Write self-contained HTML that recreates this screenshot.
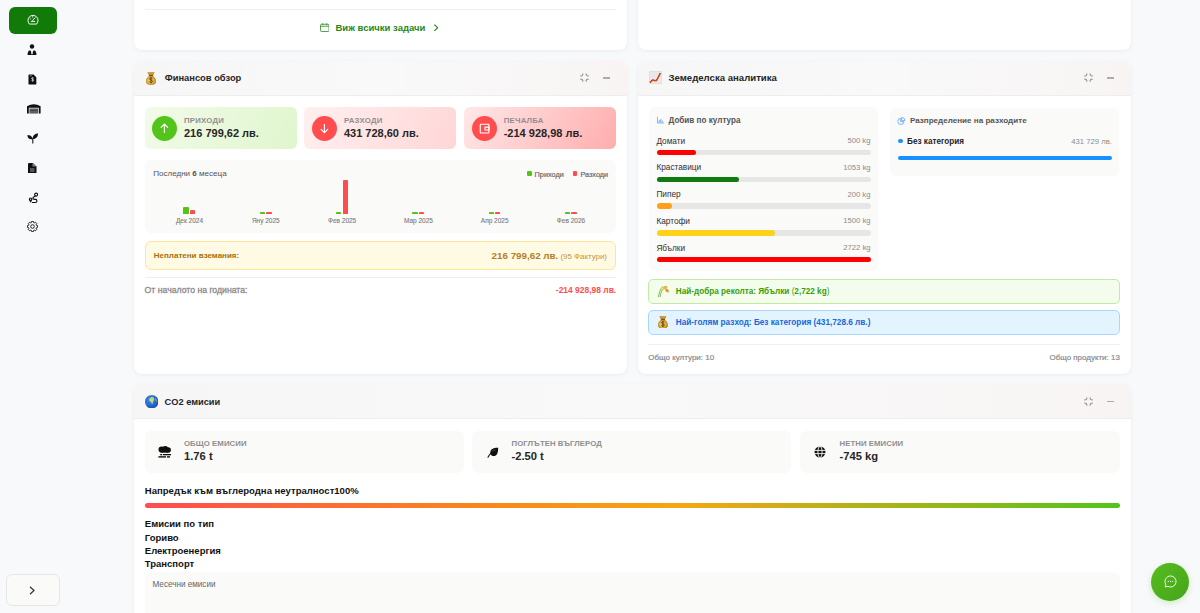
<!DOCTYPE html>
<html><head><meta charset="utf-8"><style>
html,body{margin:0;padding:0;width:1200px;height:613px;overflow:hidden;background:#f8f9fb;font-family:"Liberation Sans", sans-serif;}
.t{position:absolute;white-space:nowrap;line-height:normal;}
</style></head><body>
<div style="position:absolute;left:9px;top:7px;width:48px;height:26.7px;background:#117a09;border-radius:6px;"></div>
<svg style="position:absolute;left:26.9px;top:14.2px" width="12" height="11" viewBox="0 0 24 22" fill="none" stroke="#fff" stroke-width="1.9" stroke-linecap="round">
<path d="M4.2 19.5A10.2 10.2 0 1 1 19.8 19.5Z"/><path d="M11.2 12.8l5-5.2"/><path d="M6 9l.9.7M11.5 5.2v1M8.5 14.8h7"/></svg>
<svg style="position:absolute;left:27px;top:44px" width="10" height="11" viewBox="0 0 20 22" fill="#111">
<circle cx="10" cy="5" r="4.5"/><path d="M1 22 Q1.5 13 6 12.5 L10 17 L14 12.5 Q18.5 13 19 22Z"/><path d="M9 12.5h2l.6 7-1.6 1.5-1.6-1.5z" fill="#f8f9fb"/></svg>
<svg style="position:absolute;left:27.8px;top:73.6px" width="8.8" height="11" viewBox="0 0 19 22" fill="#111">
<path d="M2 0h10l6 6v14a2 2 0 0 1-2 2H3a2 2 0 0 1-2-2V2a2 2 0 0 1 1-2z"/>
<path d="M10 6.5v9M12.3 8.2c-.5-.8-1.5-1.1-2.4-1.1-1.3 0-2.3.7-2.3 1.7 0 2.4 4.8 1.3 4.8 3.8 0 1-1.1 1.8-2.5 1.8-1 0-2-.4-2.5-1.2" stroke="#f8f9fb" stroke-width="1.4" fill="none"/>
<path d="M4 3h4" stroke="#f8f9fb" stroke-width="1.2"/></svg>
<svg style="position:absolute;left:27.4px;top:103.2px" width="13.6" height="10.5" viewBox="0 0 27.2 21" fill="#111">
<path d="M0 6.5Q13.6-1.5 27.2 6.5V21h-3.6V9.5H3.6V21H0z"/><rect x="5" y="11" width="17.2" height="10" fill="#444"/><g fill="#888"><rect x="5" y="13.2" width="17.2" height=".9"/><rect x="5" y="16" width="17.2" height=".9"/><rect x="5" y="18.8" width="17.2" height=".9"/></g></svg>
<svg style="position:absolute;left:27px;top:132px" width="11.5" height="11.5" viewBox="0 0 24 24" fill="#111">
<path d="M11 24v-9C8 15 1 15 1 6c5 0 9.5 2 10.5 8C12 8 16 3 23 3c0 9-6 11-9.8 11.5V24z"/></svg>
<svg style="position:absolute;left:28px;top:162.5px" width="8.5" height="10.5" viewBox="0 0 17 21" fill="#111">
<path d="M2 0h8l7 7v12a2 2 0 0 1-2 2H2a2 2 0 0 1-2-2V2a2 2 0 0 1 2-2z"/><path d="M9 0v7h8" fill="#f8f9fb" opacity=".5"/>
<rect x="4" y="10" width="9" height="8" fill="#555"/></svg>
<svg style="position:absolute;left:27.5px;top:191.5px" width="11" height="12" viewBox="0 0 11 12" fill="none" stroke="#111" stroke-width="1.15" stroke-linecap="round">
<circle cx="8.1" cy="2.6" r="1.5"/><path d="M7.3 4.1C6.2 5 4.9 4.9 4.9 6.2c0 1.2 1.4 1.2 2.7 1.2 1.7 0 1.7 3.1 0 3.1H4.2"/><path d="M2.6 5.4a1.8 1.8 0 0 0-1.8 1.8c0 1.3 1.8 3.2 1.8 3.2s1.8-1.9 1.8-3.2a1.8 1.8 0 0 0-1.8-1.8z" fill="#111" stroke="none"/><circle cx="2.6" cy="7.2" r=".6" fill="#f8f9fb" stroke="none"/></svg>
<svg style="position:absolute;left:27.3px;top:221.2px" width="11" height="11" viewBox="0 0 11 11" fill="none" stroke="#222" stroke-width="1" stroke-linejoin="round">
<path d="M9.18 4.20 L10.63 4.62 L10.63 6.38 L9.18 6.80 L9.02 7.18 L9.75 8.50 L8.50 9.75 L7.18 9.02 L6.80 9.18 L6.38 10.63 L4.62 10.63 L4.20 9.18 L3.82 9.02 L2.50 9.75 L1.25 8.50 L1.98 7.18 L1.82 6.80 L0.37 6.38 L0.37 4.62 L1.82 4.20 L1.98 3.82 L1.25 2.50 L2.50 1.25 L3.82 1.98 L4.20 1.82 L4.62 0.37 L6.38 0.37 L6.80 1.82 L7.18 1.98 L8.50 1.25 L9.75 2.50 L9.02 3.82Z"/><circle cx="5.5" cy="5.5" r="1.8"/></svg>
<div style="position:absolute;left:6px;top:573.8px;width:53.5px;height:32.4px;background:#fafaf9;border:1px solid #e6e6e6;border-radius:6px;box-sizing:border-box;"></div>
<svg style="position:absolute;left:29px;top:586px" width="6" height="9" viewBox="0 0 6 9" fill="none" stroke="#333" stroke-width="1.2"><path d="M1 .8L5 4.5 1 8.2"/></svg>
<div style="position:absolute;left:133.5px;top:-30px;width:493.5px;height:79.5px;background:#fff;border-radius:8px;box-shadow:0 1px 4px rgba(0,0,0,.06);"></div>
<div style="position:absolute;left:638px;top:-30px;width:493px;height:79.5px;background:#fff;border-radius:8px;box-shadow:0 1px 4px rgba(0,0,0,.06);"></div>
<div style="position:absolute;left:145px;top:8.5px;width:471px;height:1px;background:#f0f0f0;"></div>
<svg style="position:absolute;left:319.5px;top:23px" width="9.5" height="9" viewBox="0 0 19 18" fill="none" stroke="#2a8c1e" stroke-width="1.6"><rect x="1" y="2.5" width="17" height="14.5" rx="2"/><path d="M1 6.5h17M5.5 0.5v4M13.5 .5v4"/></svg>
<div class="t" style="left:335.5px;top:21.60px;font-size:9.5px;font-weight:700;color:#1f8a17;">Виж всички задачи</div>
<svg style="position:absolute;left:433.3px;top:24px" width="6" height="7.5" viewBox="0 0 6 9" fill="none" stroke="#1f8a17" stroke-width="1.3"><path d="M1 .8L5 4.5 1 8.2"/></svg>
<div style="position:absolute;left:133.5px;top:60.5px;width:493.5px;height:313px;background:#fff;border-radius:8px;box-shadow:0 1px 4px rgba(0,0,0,.06);"></div>
<div style="position:absolute;left:133.5px;top:60.5px;width:493.5px;height:35px;background:linear-gradient(90deg,#f6f6f6,#f9f9f9 50%,#f8f4f4);border-radius:8px 8px 0 0;border-bottom:1px solid #eeeeee;box-sizing:border-box;"></div>
<svg style="position:absolute;left:580.1px;top:73.3px" width="9" height="9" viewBox="0 0 9 9" fill="none" stroke="#9c9c9c" stroke-width="1.15" stroke-linecap="round"><path d="M2.9 .7C2.9 2.1 2.1 2.9 .7 2.9M6.1 .7C6.1 2.1 6.9 2.9 8.3 2.9M2.9 8.3C2.9 6.9 2.1 6.1 .7 6.1M6.1 8.3C6.1 6.9 6.9 6.1 8.3 6.1"/></svg>
<div style="position:absolute;left:602.8px;top:77.35000000000001px;width:7.4px;height:1.7px;background:#ababab;"></div>
<div class="t" style="left:164.7px;top:72.74px;font-size:9.35px;font-weight:700;color:#262626;">Финансов обзор</div>
<svg style="position:absolute;left:146.2px;top:71.7px" width="10.0" height="13.0" viewBox="0 0 20 26">
<defs><radialGradient id="mb22" cx=".45" cy=".5" r=".65"><stop offset="0" stop-color="#ffd94a"/><stop offset=".6" stop-color="#e3a92a"/><stop offset="1" stop-color="#a96a14"/></radialGradient></defs>
<path d="M3.5 1h13l-2.8 5.5H6.3z" fill="#d99a22" stroke="#9a6410" stroke-width=".8"/><rect x="5.8" y="5.8" width="8.4" height="2.6" fill="#7d4f0c"/>
<path d="M6.3 8.4C1.2 12 .4 16 .4 19c0 4.6 4 6.6 9.6 6.6s9.6-2 9.6-6.6c0-3-.8-7-5.9-10.6z" fill="url(#mb22)" stroke="#9a6410" stroke-width=".8"/>
<path d="M12.8 13.2c-.6-1-1.6-1.4-2.8-1.4-1.6 0-2.8.9-2.8 2.1 0 3 5.8 1.6 5.8 4.6 0 1.3-1.3 2.2-3 2.2-1.3 0-2.4-.5-3-1.5M10 10.5v12" fill="none" stroke="#34384a" stroke-width="1.7"/></svg>
<div style="position:absolute;left:144.5px;top:106.8px;width:152px;height:42px;background:linear-gradient(120deg,#f2fbe9,#dff6cd);border-radius:6px;"></div>
<div style="position:absolute;left:152.1px;top:115.8px;width:24.8px;height:24.8px;background:#52c41a;border-radius:50%;"></div>
<div style="position:absolute;left:152.1px;top:115.8px;width:24.8px;height:24.8px"><svg width="24.8" height="24.8" viewBox="0 0 24 24" fill="none" stroke="#fff" stroke-width="1.1" stroke-linecap="round"><path d="M12 16V8M8.8 11l3.2-3.2 3.2 3.2"/></svg></div>
<div class="t" style="left:184.0px;top:116.04px;font-size:7.8px;font-weight:700;color:#8f8f8f;letter-spacing:.22px;">ПРИХОДИ</div>
<div class="t" style="left:184.0px;top:127.14px;font-size:11.0px;font-weight:700;color:#262626;">216 799,62 лв.</div>
<div style="position:absolute;left:304.4px;top:106.8px;width:152px;height:42px;background:linear-gradient(120deg,#fff0f0,#ffd6d6);border-radius:6px;"></div>
<div style="position:absolute;left:312.0px;top:115.8px;width:24.8px;height:24.8px;background:#ff4d4f;border-radius:50%;"></div>
<div style="position:absolute;left:312.0px;top:115.8px;width:24.8px;height:24.8px"><svg width="24.8" height="24.8" viewBox="0 0 24 24" fill="none" stroke="#fff" stroke-width="1.1" stroke-linecap="round"><path d="M12 8v8M8.8 13l3.2 3.2 3.2-3.2"/></svg></div>
<div class="t" style="left:343.9px;top:116.04px;font-size:7.8px;font-weight:700;color:#8f8f8f;letter-spacing:.22px;">РАЗХОДИ</div>
<div class="t" style="left:343.9px;top:127.14px;font-size:11.0px;font-weight:700;color:#262626;">431 728,60 лв.</div>
<div style="position:absolute;left:464.2px;top:106.8px;width:151.8px;height:42px;background:linear-gradient(120deg,#ffe8e8,#ffadad);border-radius:6px;"></div>
<div style="position:absolute;left:471.8px;top:115.8px;width:24.8px;height:24.8px;background:#ff4d4f;border-radius:50%;"></div>
<div style="position:absolute;left:471.8px;top:115.8px;width:24.8px;height:24.8px"><svg width="24.8" height="24.8" viewBox="0 0 24 24" fill="none" stroke="#fff" stroke-width="1.1"><rect x="8" y="8" width="8.4" height="8.4" rx=".6"/><path d="M12.6 10.8h3.8v2.8h-3.8z"/></svg></div>
<div class="t" style="left:503.7px;top:116.04px;font-size:7.8px;font-weight:700;color:#8f8f8f;letter-spacing:.22px;">ПЕЧАЛБА</div>
<div class="t" style="left:503.7px;top:127.14px;font-size:11.0px;font-weight:700;color:#262626;">-214 928,98 лв.</div>
<div style="position:absolute;left:144.8px;top:159.8px;width:471.4px;height:73.6px;background:#fafaf9;border-radius:6px;"></div>
<div class="t" style="left:153.2px;top:169.31px;font-size:8.05px;font-weight:400;color:#555;">Последни <b style="font-weight:700">6</b> месеца</div>
<div style="position:absolute;left:526.9px;top:171px;width:4.8px;height:5px;background:#52c41a;border-radius:1px;"></div>
<div class="t" style="left:534.6px;top:169.79px;font-size:7.3px;font-weight:400;color:#6a6a6a;-webkit-text-stroke:.2px #6a6a6a;">Приходи</div>
<div style="position:absolute;left:572.7px;top:171px;width:4.8px;height:5px;background:#ff4d4f;border-radius:1px;"></div>
<div class="t" style="left:580.4px;top:169.79px;font-size:7.3px;font-weight:400;color:#6a6a6a;-webkit-text-stroke:.2px #6a6a6a;">Разходи</div>
<div style="position:absolute;left:183.3px;top:207.1px;width:5.4px;height:6.5px;background:#52c41a;border-radius:1px 1px 0 0;"></div>
<div style="position:absolute;left:189.9px;top:210.2px;width:5.4px;height:3.4px;background:#ff4d4f;border-radius:1px 1px 0 0;"></div>
<div class="t" style="left:149.5px;width:80px;text-align:center;top:216.92px;font-size:6.5px;color:#7a7a7a;-webkit-text-stroke:.1px #7a7a7a">Дек 2024</div>
<div style="position:absolute;left:259.6px;top:211.9px;width:5.4px;height:1.7px;background:#52c41a;border-radius:1px 1px 0 0;"></div>
<div style="position:absolute;left:266.2px;top:211.9px;width:5.4px;height:1.7px;background:#ff4d4f;border-radius:1px 1px 0 0;"></div>
<div class="t" style="left:225.8px;width:80px;text-align:center;top:216.92px;font-size:6.5px;color:#7a7a7a;-webkit-text-stroke:.1px #7a7a7a">Яну 2025</div>
<div style="position:absolute;left:335.90000000000003px;top:211.9px;width:5.4px;height:1.7px;background:#52c41a;border-radius:1px 1px 0 0;"></div>
<div style="position:absolute;left:342.5px;top:180.0px;width:5.4px;height:33.6px;background:#ff4d4f;border-radius:1px 1px 0 0;"></div>
<div class="t" style="left:302.1px;width:80px;text-align:center;top:216.92px;font-size:6.5px;color:#7a7a7a;-webkit-text-stroke:.1px #7a7a7a">Фев 2025</div>
<div style="position:absolute;left:412.2px;top:211.9px;width:5.4px;height:1.7px;background:#52c41a;border-radius:1px 1px 0 0;"></div>
<div style="position:absolute;left:418.79999999999995px;top:211.9px;width:5.4px;height:1.7px;background:#ff4d4f;border-radius:1px 1px 0 0;"></div>
<div class="t" style="left:378.4px;width:80px;text-align:center;top:216.92px;font-size:6.5px;color:#7a7a7a;-webkit-text-stroke:.1px #7a7a7a">Мар 2025</div>
<div style="position:absolute;left:488.5px;top:211.9px;width:5.4px;height:1.7px;background:#52c41a;border-radius:1px 1px 0 0;"></div>
<div style="position:absolute;left:495.09999999999997px;top:211.9px;width:5.4px;height:1.7px;background:#ff4d4f;border-radius:1px 1px 0 0;"></div>
<div class="t" style="left:454.7px;width:80px;text-align:center;top:216.92px;font-size:6.5px;color:#7a7a7a;-webkit-text-stroke:.1px #7a7a7a">Апр 2025</div>
<div style="position:absolute;left:564.8px;top:211.9px;width:5.4px;height:1.7px;background:#52c41a;border-radius:1px 1px 0 0;"></div>
<div style="position:absolute;left:571.4px;top:211.9px;width:5.4px;height:1.7px;background:#ff4d4f;border-radius:1px 1px 0 0;"></div>
<div class="t" style="left:531.0px;width:80px;text-align:center;top:216.92px;font-size:6.5px;color:#7a7a7a;-webkit-text-stroke:.1px #7a7a7a">Фев 2026</div>
<div style="position:absolute;left:144.6px;top:241.3px;width:471.6px;height:28.4px;background:#fffae3;border:1px solid #ffe49a;border-radius:6px;box-sizing:border-box;"></div>
<div class="t" style="left:153.8px;top:251.46px;font-size:8.0px;font-weight:700;color:#a86f0a;">Неплатени вземания:</div>
<div class="t" style="right:641.7px;top:250.43px;font-size:9.8px;font-weight:700;color:#b5801f;">216 799,62 лв.</div>
<div class="t" style="right:593px;top:251.75px;font-size:7.9px;font-weight:400;color:#bf9445;">(95 Фактури)</div>
<div style="position:absolute;left:144.6px;top:276.5px;width:471.6px;height:1px;background:#f0f0f0;"></div>
<div class="t" style="left:144.6px;top:284.94px;font-size:8.68px;font-weight:400;color:#8a8a8a;-webkit-text-stroke:.3px #8a8a8a;">От началото на годината:</div>
<div class="t" style="right:583.8px;top:285.04px;font-size:8.46px;font-weight:700;color:#ff4d4f;">-214 928,98 лв.</div>
<div style="position:absolute;left:638px;top:60.5px;width:493px;height:313px;background:#fff;border-radius:8px;box-shadow:0 1px 4px rgba(0,0,0,.06);"></div>
<div style="position:absolute;left:638px;top:60.5px;width:493px;height:35px;background:linear-gradient(90deg,#f6f6f6,#f9f9f9 50%,#f8f4f4);border-radius:8px 8px 0 0;border-bottom:1px solid #eeeeee;box-sizing:border-box;"></div>
<svg style="position:absolute;left:1084.1px;top:73.3px" width="9" height="9" viewBox="0 0 9 9" fill="none" stroke="#9c9c9c" stroke-width="1.15" stroke-linecap="round"><path d="M2.9 .7C2.9 2.1 2.1 2.9 .7 2.9M6.1 .7C6.1 2.1 6.9 2.9 8.3 2.9M2.9 8.3C2.9 6.9 2.1 6.1 .7 6.1M6.1 8.3C6.1 6.9 6.9 6.1 8.3 6.1"/></svg>
<div style="position:absolute;left:1106.8px;top:77.35000000000001px;width:7.4px;height:1.7px;background:#ababab;"></div>
<svg style="position:absolute;left:649.3px;top:70.9px" width="13" height="13" viewBox="0 0 13 13">
<rect x="0" y="0" width="13" height="13" fill="#dcdcdc"/><rect x=".6" y=".6" width="11.8" height="11.8" fill="#e9e9e9"/>
<g fill="#cde8f8"><circle cx="4.5" cy="2" r=".6"/><circle cx="7" cy="2" r=".6"/><circle cx="9.5" cy="2" r=".6"/><circle cx="5.5" cy="4" r=".6"/><circle cx="3" cy="7.5" r=".6"/><circle cx="7" cy="11.3" r=".6"/></g>
<path d="M.9 11.6L3.7 9.1 5.9 9.8 7.6 9.4 9.4 6.2 11.3 2.4" fill="none" stroke="#b07a22" stroke-width="1.5" stroke-linejoin="round"/>
<path d="M.9 11.2L3.7 8.7 5.9 9.4 7.6 9 9.4 5.8 11.3 2" fill="none" stroke="#f5141a" stroke-width="1.1" stroke-linejoin="round" stroke-dasharray="1.2 .6"/></svg>
<div class="t" style="left:668.5px;top:71.61px;font-size:9.6px;font-weight:700;color:#262626;">Земеделска аналитика</div>
<div style="position:absolute;left:648.7px;top:106.9px;width:229.8px;height:163.7px;background:#fafaf9;border-radius:6px;"></div>
<svg style="position:absolute;left:656.9px;top:117.3px" width="7" height="6.5" viewBox="0 0 14 13" fill="none" stroke="#4a9df8" stroke-width="1.4"><path d="M1 0v12h13"/><path d="M4.5 11V6M7.5 11V4M10.5 11V7" stroke-width="1.6"/></svg>
<div class="t" style="left:668.5px;top:116.44px;font-size:8.13px;font-weight:700;color:#555;">Добив по култура</div>
<div class="t" style="left:656.4px;top:136.52px;font-size:8.27px;font-weight:400;color:#333;">Домати</div>
<div class="t" style="right:329.5px;top:135.73px;font-size:7.7px;font-weight:400;color:#8c8c8c;">500 kg</div>
<div style="position:absolute;left:656.6px;top:149.6px;width:214px;height:5.3px;background:#e6e6e6;border-radius:3px;"></div>
<div style="position:absolute;left:656.6px;top:149.6px;width:39.309331373989714px;height:5.3px;background:#ff0000;border-radius:3px;"></div>
<div class="t" style="left:656.4px;top:163.42px;font-size:8.27px;font-weight:400;color:#333;">Краставици</div>
<div class="t" style="right:329.5px;top:162.63px;font-size:7.7px;font-weight:400;color:#8c8c8c;">1053 kg</div>
<div style="position:absolute;left:656.6px;top:176.5px;width:214px;height:5.3px;background:#e6e6e6;border-radius:3px;"></div>
<div style="position:absolute;left:656.6px;top:176.5px;width:82.78545187362234px;height:5.3px;background:#0f7a0f;border-radius:3px;"></div>
<div class="t" style="left:656.4px;top:190.32px;font-size:8.27px;font-weight:400;color:#333;">Пипер</div>
<div class="t" style="right:329.5px;top:189.53px;font-size:7.7px;font-weight:400;color:#8c8c8c;">200 kg</div>
<div style="position:absolute;left:656.6px;top:203.4px;width:214px;height:5.3px;background:#e6e6e6;border-radius:3px;"></div>
<div style="position:absolute;left:656.6px;top:203.4px;width:15.723732549595885px;height:5.3px;background:#ffa01a;border-radius:3px;"></div>
<div class="t" style="left:656.4px;top:217.22px;font-size:8.27px;font-weight:400;color:#333;">Картофи</div>
<div class="t" style="right:329.5px;top:216.43px;font-size:7.7px;font-weight:400;color:#8c8c8c;">1500 kg</div>
<div style="position:absolute;left:656.6px;top:230.29999999999998px;width:214px;height:5.3px;background:#e6e6e6;border-radius:3px;"></div>
<div style="position:absolute;left:656.6px;top:230.29999999999998px;width:117.92799412196914px;height:5.3px;background:#ffd21a;border-radius:3px;"></div>
<div class="t" style="left:656.4px;top:244.12px;font-size:8.27px;font-weight:400;color:#333;">Ябълки</div>
<div class="t" style="right:329.5px;top:243.33px;font-size:7.7px;font-weight:400;color:#8c8c8c;">2722 kg</div>
<div style="position:absolute;left:656.6px;top:257.2px;width:214px;height:5.3px;background:#e6e6e6;border-radius:3px;"></div>
<div style="position:absolute;left:656.6px;top:257.2px;width:214.0px;height:5.3px;background:#ff0000;border-radius:3px;"></div>
<div style="position:absolute;left:889.7px;top:107.5px;width:229.8px;height:68.3px;background:#fafaf9;border-radius:6px;"></div>
<svg style="position:absolute;left:897.3px;top:117.2px" width="8.3" height="7.8" viewBox="0 0 16 15" fill="none" stroke="#4a9df8" stroke-width="1.4"><path d="M7 2.5A6 6 0 1 0 13.5 9H7z"/><path d="M9 .8A6 6 0 0 1 15.2 7H9z"/></svg>
<div class="t" style="left:909.9px;top:116.49px;font-size:8.08px;font-weight:700;color:#555;">Разпределение на разходите</div>
<div style="position:absolute;left:897.8px;top:138.6px;width:4.8px;height:4.8px;background:#1890ff;border-radius:50%;"></div>
<div class="t" style="left:907.1px;top:136.61px;font-size:8.17px;font-weight:700;color:#1f1f1f;">Без категория</div>
<div class="t" style="right:88.09999999999991px;top:136.83px;font-size:7.7px;font-weight:400;color:#8c8c8c;">431 729 лв.</div>
<div style="position:absolute;left:897.8px;top:155.9px;width:214.1px;height:4.4px;background:#1890ff;border-radius:3px;"></div>
<div style="position:absolute;left:648.2px;top:278.7px;width:471.6px;height:25.5px;background:#f4fdec;border:1px solid #c0eba0;border-radius:5px;box-sizing:border-box;"></div>
<svg style="position:absolute;left:657px;top:284.8px" width="13" height="12.5" viewBox="0 0 26 25">
<path d="M3 24C4 16 6 9 11 3" stroke="#7cc24a" stroke-width="2" fill="none"/><path d="M6 24C7 17 9 11 14 6" stroke="#5fa83a" stroke-width="1.6" fill="none"/>
<ellipse cx="16" cy="5" rx="5" ry="3" fill="#e7b84e" transform="rotate(-20 16 5)"/><ellipse cx="20" cy="11" rx="4.5" ry="3" fill="#d9a23c" transform="rotate(40 20 11)"/><ellipse cx="11" cy="9" rx="3" ry="2" fill="#f0cb6a"/></svg>
<div class="t" style="left:675.8px;top:287.08px;font-size:8.2px;font-weight:700;color:#389e0d;">Най-добра реколта: Ябълки <span style="font-weight:400">(</span>2,722 kg<span style="font-weight:400">)</span></div>
<div style="position:absolute;left:648.2px;top:309.7px;width:471.6px;height:25.5px;background:#e4f4ff;border:1px solid #a9d6ff;border-radius:5px;box-sizing:border-box;"></div>
<svg style="position:absolute;left:658.4px;top:315.5px" width="9.8" height="12.74" viewBox="0 0 20 26">
<defs><radialGradient id="mb109" cx=".45" cy=".5" r=".65"><stop offset="0" stop-color="#ffd94a"/><stop offset=".6" stop-color="#e3a92a"/><stop offset="1" stop-color="#a96a14"/></radialGradient></defs>
<path d="M3.5 1h13l-2.8 5.5H6.3z" fill="#d99a22" stroke="#9a6410" stroke-width=".8"/><rect x="5.8" y="5.8" width="8.4" height="2.6" fill="#7d4f0c"/>
<path d="M6.3 8.4C1.2 12 .4 16 .4 19c0 4.6 4 6.6 9.6 6.6s9.6-2 9.6-6.6c0-3-.8-7-5.9-10.6z" fill="url(#mb109)" stroke="#9a6410" stroke-width=".8"/>
<path d="M12.8 13.2c-.6-1-1.6-1.4-2.8-1.4-1.6 0-2.8.9-2.8 2.1 0 3 5.8 1.6 5.8 4.6 0 1.3-1.3 2.2-3 2.2-1.3 0-2.4-.5-3-1.5M10 10.5v12" fill="none" stroke="#34384a" stroke-width="1.7"/></svg>
<div class="t" style="left:675.8px;top:318.06px;font-size:8.22px;font-weight:700;color:#1668dc;">Най-голям разход: Без категория (431,728.6 лв.)</div>
<div style="position:absolute;left:648.2px;top:343.5px;width:471.6px;height:1px;background:#f0f0f0;"></div>
<div class="t" style="left:648.2px;top:352.96px;font-size:8.0px;font-weight:400;color:#8c8c8c;-webkit-text-stroke:.22px #8c8c8c;">Общо култури: 10</div>
<div class="t" style="right:80.20000000000005px;top:353.00px;font-size:7.96px;font-weight:400;color:#8c8c8c;-webkit-text-stroke:.22px #8c8c8c;">Общо продукти: 13</div>
<div style="position:absolute;left:133.5px;top:384.2px;width:997.5px;height:260px;background:#fff;border-radius:8px;box-shadow:0 1px 4px rgba(0,0,0,.06);"></div>
<div style="position:absolute;left:133.5px;top:384.2px;width:997.5px;height:35.3px;background:linear-gradient(90deg,#f6f6f6,#f9f9f9 50%,#f8f4f4);border-radius:8px 8px 0 0;border-bottom:1px solid #eeeeee;box-sizing:border-box;"></div>
<svg style="position:absolute;left:1084.1px;top:396.70000000000005px" width="9" height="9" viewBox="0 0 9 9" fill="none" stroke="#9c9c9c" stroke-width="1.15" stroke-linecap="round"><path d="M2.9 .7C2.9 2.1 2.1 2.9 .7 2.9M6.1 .7C6.1 2.1 6.9 2.9 8.3 2.9M2.9 8.3C2.9 6.9 2.1 6.1 .7 6.1M6.1 8.3C6.1 6.9 6.9 6.1 8.3 6.1"/></svg>
<div style="position:absolute;left:1106.8px;top:400.75px;width:7.4px;height:1.7px;background:#ababab;"></div>
<svg style="position:absolute;left:144.5px;top:394.7px" width="13.5" height="13.5" viewBox="0 0 20 20">
<defs><radialGradient id="gl" cx=".4" cy=".35" r=".7"><stop offset="0" stop-color="#3d8ff5"/><stop offset="1" stop-color="#1450c0"/></radialGradient></defs>
<circle cx="10" cy="10" r="9.8" fill="url(#gl)"/>
<path d="M6 6.5c1-1.8 2.6-3 4.6-3.5 1.4.3 2.5 1 3 2-.8.6-.6 1.6.3 2.2-.8.6-1.5 1.6-1.8 3-.4 1.6-1 2.8-1.8 3.5-.4-1.2-.6-2.3-1.3-3.3C8.2 10 6.5 8.5 6 6.5z" fill="#b9dd6a"/>
<path d="M7.5 7c.8-.2 1.8.1 2.2.8-.7.4-1.8.3-2.2-.8z" fill="#f3e6a8"/><path d="M14.8 4.2c1.8 1.4 3 3.3 3.4 5.6-.8.3-1.6-.2-2.1-1-.6-1.2-1-2.8-1.3-4.6z" fill="#c79a52"/>
<path d="M1.2 12.5c.6.2 1.3.9 1.4 1.8-.5.3-1-.2-1.4-1.8z" fill="#e8b84a"/><circle cx="10" cy="10" r="9.8" fill="none" stroke="#0b2f70" stroke-width=".8" opacity=".5"/></svg>
<div class="t" style="left:164.5px;top:396.91px;font-size:9.27px;font-weight:700;color:#262626;">CO2 емисии</div>
<div style="position:absolute;left:144.8px;top:430.7px;width:319.2px;height:42px;background:#fafaf9;border-radius:6px;"></div>
<div style="position:absolute;left:157px;top:445px;line-height:0"><svg width="15" height="14" viewBox="0 0 15 14" fill="#111"><circle cx="4.6" cy="4.6" r="3.1"/><circle cx="8.2" cy="3.9" r="3"/><circle cx="11.2" cy="5" r="2.7"/><rect x="4.6" y="4.5" width="6.6" height="3.2"/><rect x="3.2" y="9" width="2" height="1.3"/><rect x="6" y="9" width="8" height="1.3"/><rect x="1.4" y="11.2" width="7.6" height="1.4"/><rect x="10" y="11.2" width="3" height="1.4"/></svg></div>
<div class="t" style="left:184.0px;top:439.14px;font-size:7.8px;font-weight:700;color:#8f8f8f;letter-spacing:.05px;">ОБЩО ЕМИСИИ</div>
<div class="t" style="left:184.0px;top:450.16px;font-size:11.2px;font-weight:700;color:#262626;">1.76 t</div>
<div style="position:absolute;left:472.3px;top:430.7px;width:319.2px;height:42px;background:#fafaf9;border-radius:6px;"></div>
<div style="position:absolute;left:486.5px;top:446.5px;line-height:0"><svg width="12" height="11" viewBox="0 0 12 11" fill="#111"><path d="M11.2.8C8 .6 3.6 1.3 3.3 5.4c-.1 2.6 2 3.8 4.1 3.6 3.2-.3 3.8-4.7 3.8-8.2z"/><path d="M8.3 3.2C5.5 4.6 2.6 6.6 1 10.2" fill="none" stroke="#111" stroke-width="1.1" stroke-linecap="round"/><path d="M5 4.3c1-.6 2.4-1 3.6-1.2" stroke="#666" stroke-width=".6" fill="none"/></svg></div>
<div class="t" style="left:511.5px;top:439.14px;font-size:7.8px;font-weight:700;color:#8f8f8f;letter-spacing:.05px;">ПОГЛЪТЕН ВЪГЛЕРОД</div>
<div class="t" style="left:511.5px;top:450.16px;font-size:11.2px;font-weight:700;color:#262626;">-2.50 t</div>
<div style="position:absolute;left:800.3px;top:430.7px;width:319.4px;height:42px;background:#fafaf9;border-radius:6px;"></div>
<div style="position:absolute;left:814.4px;top:445.5px;line-height:0"><svg width="12" height="12" viewBox="0 0 12 12" fill="#111"><circle cx="6" cy="6" r="5.5"/><g stroke="#fafaf9" stroke-width=".9" fill="none"><ellipse cx="6" cy="6" rx="2.1" ry="5.6"/><path d="M0 4.4h12M0 7.6h12"/></g></svg></div>
<div class="t" style="left:839.5px;top:439.14px;font-size:7.8px;font-weight:700;color:#8f8f8f;letter-spacing:.05px;">НЕТНИ ЕМИСИИ</div>
<div class="t" style="left:839.5px;top:450.16px;font-size:11.2px;font-weight:700;color:#262626;">-745 kg</div>
<div class="t" style="left:144.8px;top:484.76px;font-size:9.55px;font-weight:700;color:#111;">Напредък към въглеродна неутралност100%</div>
<div style="position:absolute;left:144.8px;top:502.8px;width:975.2px;height:5.2px;background:linear-gradient(90deg,#ff4d4f 0%,#fa8c16 38%,#f5a614 55%,#52c41a 100%);border-radius:3px;"></div>
<div class="t" style="left:144.8px;top:518.20px;font-size:9.5px;font-weight:700;color:#111;">Емисии по тип</div>
<div class="t" style="left:144.8px;top:531.62px;font-size:9.5px;font-weight:700;color:#111;">Гориво</div>
<div class="t" style="left:144.8px;top:545.04px;font-size:9.5px;font-weight:700;color:#111;">Електроенергия</div>
<div class="t" style="left:144.8px;top:558.46px;font-size:9.5px;font-weight:700;color:#111;">Транспорт</div>
<div style="position:absolute;left:144.8px;top:572.1px;width:975.2px;height:60px;background:#fafaf9;border-radius:8px;"></div>
<div class="t" style="left:152.5px;top:580.22px;font-size:8.15px;font-weight:400;color:#666;">Месечни емисии</div>
<div style="position:absolute;left:1151px;top:563px;width:37.8px;height:37.8px;background:linear-gradient(135deg,#56bd20,#45a518);border-radius:50%;box-shadow:0 2px 6px rgba(82,196,26,.25);"></div>
<svg style="position:absolute;left:1163.5px;top:575px" width="13" height="13" viewBox="0 0 24 24" fill="none" stroke="#fff" stroke-width="1.7"><path d="M12 1.8a10.2 10.2 0 0 0-8.8 15.3L2.3 22l5-1a10.2 10.2 0 1 0 4.7-19.2z"/><circle cx="7.8" cy="11.8" r="1" fill="#fff" stroke="none"/><circle cx="12" cy="11.8" r="1" fill="#fff" stroke="none"/><circle cx="16.2" cy="11.8" r="1" fill="#fff" stroke="none"/></svg>
</body></html>
